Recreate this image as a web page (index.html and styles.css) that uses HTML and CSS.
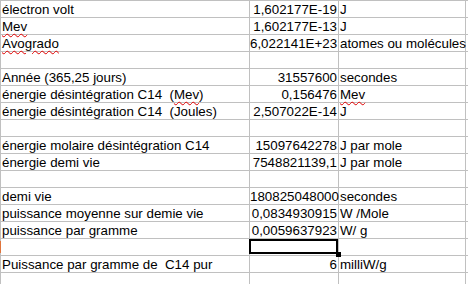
FILE: index.html
```html
<!DOCTYPE html>
<html>
<head>
<meta charset="utf-8">
<link rel="stylesheet" href="styles.css">
</head>
<body>
<div class="sheet">
  <div class="c a">électron volt</div><div class="c b">1,602177E-19</div><div class="c t">J</div><div class="c d"></div>
  <div class="c a"><span class="sp">Mev</span></div><div class="c b">1,602177E-13</div><div class="c t">J</div><div class="c d"></div>
  <div class="c a"><span class="sp">Avogrado</span></div><div class="c b">6,022141E+23</div><div class="c t">atomes ou molécules</div><div class="c d"></div>
  <div class="c a"></div><div class="c b"></div><div class="c t"></div><div class="c d"></div>
  <div class="c a">Année (365,25 jours)</div><div class="c b">31557600</div><div class="c t">secondes</div><div class="c d"></div>
  <div class="c a">énergie désintégration C14&nbsp; (<span class="sp">Mev</span>)</div><div class="c b">0,156476</div><div class="c t"><span class="sp">Mev</span></div><div class="c d"></div>
  <div class="c a">énergie désintégration C14&nbsp; (Joules)</div><div class="c b">2,507022E-14</div><div class="c t">J</div><div class="c d"></div>
  <div class="c a"></div><div class="c b"></div><div class="c t"></div><div class="c d"></div>
  <div class="c a">énergie molaire désintégration C14</div><div class="c b">15097642278</div><div class="c t">J par mole</div><div class="c d"></div>
  <div class="c a">énergie demi vie</div><div class="c b">7548821139,1</div><div class="c t">J par mole</div><div class="c d"></div>
  <div class="c a"></div><div class="c b"></div><div class="c t"></div><div class="c d"></div>
  <div class="c a">demi vie</div><div class="c b">180825048000</div><div class="c t">secondes</div><div class="c d"></div>
  <div class="c a">puissance moyenne sur demie vie</div><div class="c b">0,0834930915</div><div class="c t">W /Mole</div><div class="c d"></div>
  <div class="c a">puissance par gramme</div><div class="c b">0,0059637923</div><div class="c t">W/ g</div><div class="c d"></div>
  <div class="c a marked"></div><div class="c b selected"></div><div class="c t"></div><div class="c d"></div>
  <div class="c a">Puissance par gramme de&nbsp; C14 pur</div><div class="c b">6</div><div class="c t">milliW/g</div><div class="c d"></div>
  <div class="c a"></div><div class="c b"></div><div class="c t"></div><div class="c d"></div>
</div>
</body>
</html>
```

FILE: styles.css
```css
html, body {
  margin: 0;
  padding: 0;
  background: #fff;
}
body {
  width: 468px;
  height: 284px;
  overflow: hidden;
}
.sheet {
  display: grid;
  grid-template-columns: 249px 89px 127px 2px;
  grid-auto-rows: 17px;
  width: 468px;
  box-sizing: border-box;
  border-top: 1px solid #c0c0c0;
  border-left: 1px solid #c0c0c0;
  font-family: "Liberation Sans", Arial, sans-serif;
  font-size: 13.33px;
  color: #000;
}
.c {
  box-sizing: border-box;
  border-right: 1px solid #c0c0c0;
  border-bottom: 1px solid #c0c0c0;
  line-height: 15px;
  padding-top: 1px;
  white-space: nowrap;
  position: relative;
}
.d {
  border-right: none;
}
.a, .t {
  padding-left: 1px;
}
.b {
  text-align: right;
  padding-right: 1px;
}
.sp {
  text-decoration-line: underline;
  text-decoration-style: wavy;
  text-decoration-color: #e00000;
  text-decoration-thickness: 1px;
  text-underline-offset: 2px;
}
.selected::after {
  content: "";
  position: absolute;
  left: -1px;
  top: 0;
  right: 0;
  bottom: 1px;
  border: 2px solid #000;
}
.selected::before {
  content: "";
  position: absolute;
  right: -3px;
  bottom: -2px;
  width: 5px;
  height: 5px;
  background: #000;
  z-index: 2;
}
.marked::before {
  content: "";
  position: absolute;
  left: -1px;
  top: 2px;
  bottom: 2px;
  width: 1px;
  background: #e0743c;
}
```
